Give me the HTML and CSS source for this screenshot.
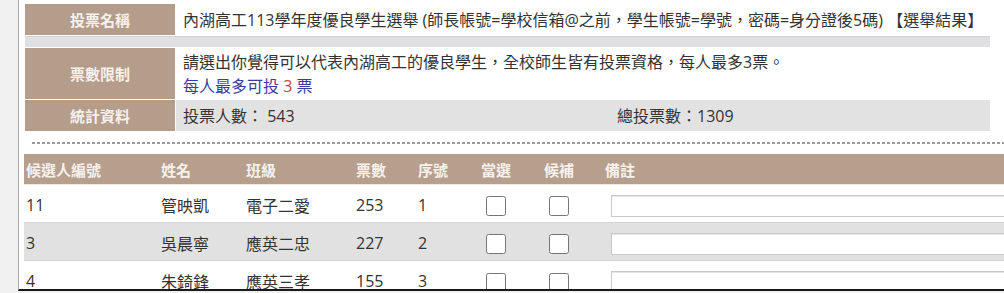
FILE: index.html
```html
<!DOCTYPE html>
<html lang="zh-Hant">
<head>
    <meta charset="UTF-8">
    <title>選舉結果</title>
    <link rel="stylesheet" href="styles.css">
</head>
<body>
    <div class="side"></div>
    <div class="panel">
        <table class="info">
            <tr class="row-name">
                <th class="label">投票名稱</th>
                <td class="value">內湖高工113學年度優良學生選舉 (師長帳號=學校信箱@之前，學生帳號=學號，密碼=身分證後5碼) 【選舉結果】</td>
            </tr>
            <tr class="row-spacer">
                <td colspan="2"></td>
            </tr>
            <tr class="row-limit">
                <th class="label">票數限制</th>
                <td class="value">
                    <div>請選出你覺得可以代表內湖高工的優良學生，全校師生皆有投票資格，每人最多3票。</div>
                    <div class="limit">每人最多可投 <span class="num">3</span> 票</div>
                </td>
            </tr>
            <tr class="row-stats">
                <th class="label">統計資料</th>
                <td class="value stats"><span class="voters">投票人數： 543</span><span class="total">總投票數：1309</span></td>
            </tr>
        </table>

        <div class="dashed"></div>

        <table class="result">
            <colgroup>
                <col style="width:135px">
                <col style="width:85px">
                <col style="width:110px">
                <col style="width:62px">
                <col style="width:63px">
                <col style="width:63px">
                <col style="width:61px">
                <col style="width:500px">
            </colgroup>
            <tr class="head">
                <th>候選人編號</th>
                <th>姓名</th>
                <th>班級</th>
                <th>票數</th>
                <th>序號</th>
                <th>當選</th>
                <th>候補</th>
                <th>備註</th>
            </tr>
            <tr>
                <td>11</td>
                <td>管映凱</td>
                <td>電子二愛</td>
                <td>253</td>
                <td>1</td>
                <td><input type="checkbox" class="check"></td>
                <td><input type="checkbox" class="check"></td>
                <td><input type="text" class="note"></td>
            </tr>
            <tr class="alt">
                <td>3</td>
                <td>吳晨寧</td>
                <td>應英二忠</td>
                <td>227</td>
                <td>2</td>
                <td><input type="checkbox" class="check"></td>
                <td><input type="checkbox" class="check"></td>
                <td><input type="text" class="note"></td>
            </tr>
            <tr>
                <td>4</td>
                <td>朱錡鋒</td>
                <td>應英三孝</td>
                <td>155</td>
                <td>3</td>
                <td><input type="checkbox" class="check"></td>
                <td><input type="checkbox" class="check"></td>
                <td><input type="text" class="note"></td>
            </tr>
        </table>
    </div>
</body>
</html>
```

FILE: styles.css
```css
body {
    margin: 0;
    font-family: "Open Sans", "Noto Sans CJK TC", sans-serif;
    font-size: 16px;
    color: #333;
    background-color: #f1f1f1;
    display: flex;
    height: 293px;
    overflow: hidden;
}

.side {
    width: 18px;
    flex-shrink: 0;
}

.panel {
    flex: 1;
    height: 291px;
    background-color: #fff;
    border-left: 1px solid #a9a9a9;
    border-bottom: 2px solid #1a1a1a;
    padding: 3px 0 0 5px;
    box-sizing: border-box;
    overflow: hidden;
}

/* upper info table */
.info {
    border-collapse: separate;
    border-spacing: 1px;
    width: 967px;
}

.info th,
.info td {
    padding: 0;
}

.label {
    width: 150px;
    background-color: #b49d8b;
    color: #f6f1ec;
    font-size: 15px;
    font-weight: bold;
    text-align: center;
}

.value {
    padding-left: 7px !important;
    line-height: 24px;
    white-space: nowrap;
}

.row-name th,
.row-name td {
    height: 31px;
}

.row-spacer td {
    height: 11px;
    background-color: #e0e0e3;
    border-top: 1px solid #d2d2d4;
    box-sizing: border-box;
}

.row-limit th,
.row-limit td {
    height: 51px;
}

.limit {
    color: #3b3b9c;
}

.limit .num {
    color: #d23c3c;
}

.row-stats th,
.row-stats td {
    height: 31px;
}

.stats {
    background-color: #e2e2e2;
}

.voters {
    display: inline-block;
    width: 434px;
}

.dashed {
    margin: 10px 0 0 8px;
    height: 2px;
    background-image: repeating-linear-gradient(to right, #9a9a9a 0 3px, transparent 3px 5px);
}

/* lower result table */
.result {
    margin-top: 10px;
    border-collapse: collapse;
    table-layout: fixed;
    width: 1079px;
}

.result th {
    height: 30px;
    padding: 0 2px;
    background-color: #b79f8d;
    color: #f6f1ec;
    font-size: 15px;
    font-weight: bold;
    text-align: left;
    border-bottom: 1px solid #f3e9df;
}

.result td {
    height: 38px;
    padding: 3px 2px 0;
    box-sizing: border-box;
    white-space: nowrap;
    border-top: 1px solid #d4d4d4;
}

.result tr.alt td {
    background-color: #e1e1e1;
}

.check {
    width: 20px;
    height: 20px;
    margin: 0 0 0 5px;
    vertical-align: middle;
}

.note {
    width: 480px;
    height: 22px;
    margin: 0 0 0 6px;
    padding: 0;
    border: 1px solid #c9c9c9;
    box-shadow: inset 0 1px 0 #e6e6e6;
    box-sizing: border-box;
    vertical-align: middle;
}
```
